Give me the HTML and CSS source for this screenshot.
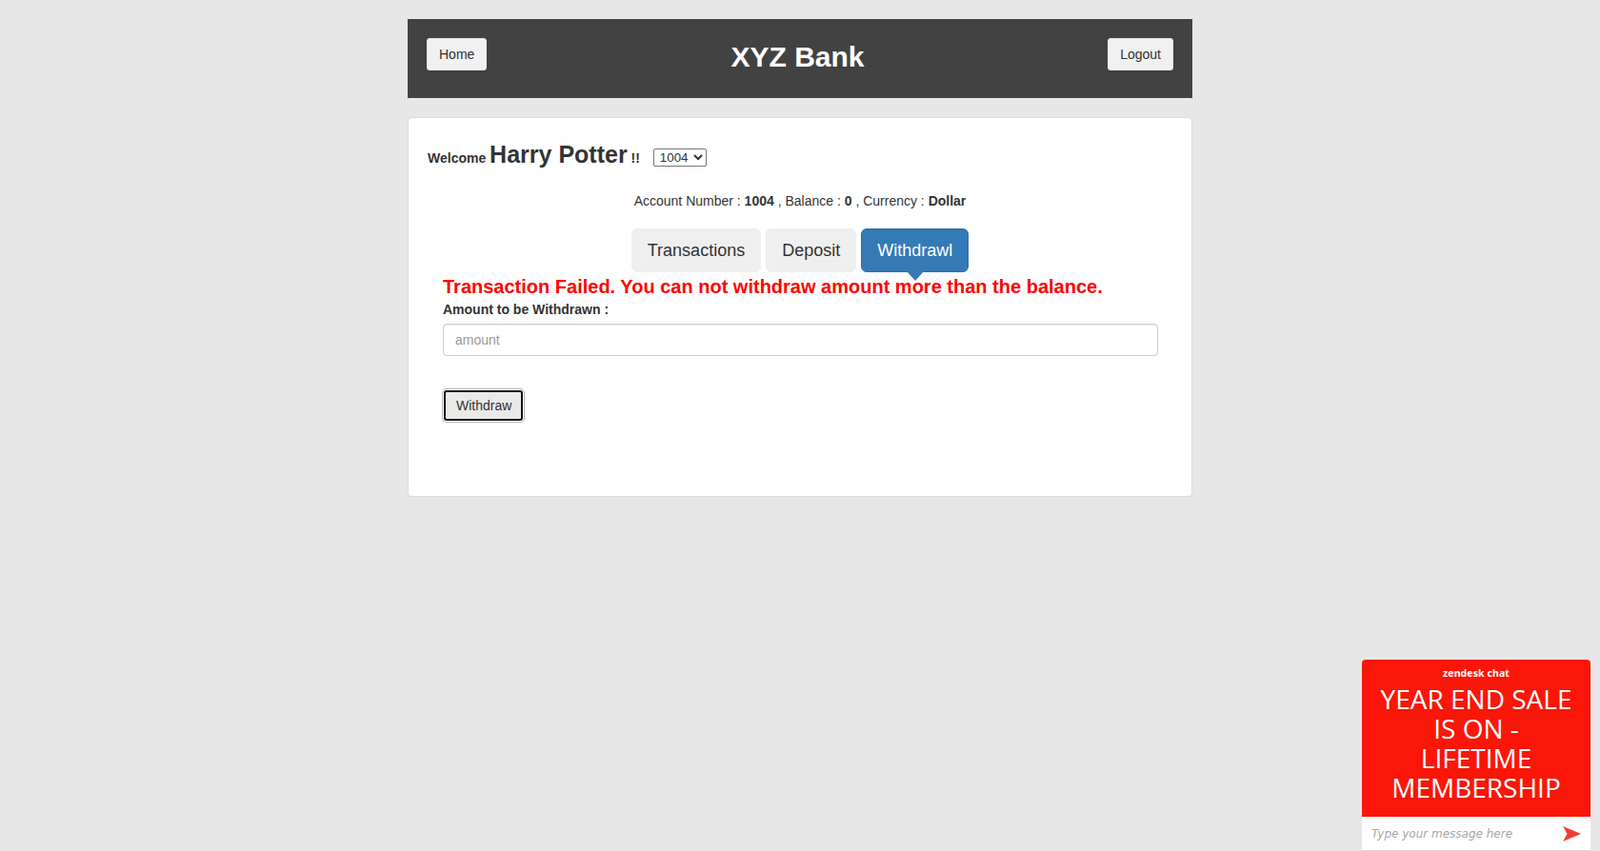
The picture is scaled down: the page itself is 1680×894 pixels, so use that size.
FILE: index.html
```html
<!DOCTYPE html>
<html lang="en">
<head>
<meta charset="utf-8">
<title>XYZ Bank</title>
<link rel="stylesheet" href="styles.css">
</head>
<body>
<div class="page">
  <header class="hdr">
    <button class="hbtn home">Home</button>
    <strong class="title">XYZ Bank</strong>
    <button class="hbtn logout">Logout</button>
  </header>
  <section class="card">
    <div class="welcome">
      <strong>Welcome <span class="big">Harry Potter</span> !!</strong>
      <select class="acctsel">
        <option>1004</option>
        <option>1005</option>
        <option>1006</option>
      </select>
    </div>
    <div class="acct">Account Number : <strong>1004</strong> , Balance : <strong>0</strong> , Currency : <strong>Dollar</strong></div>
    <div class="tabs">
      <button class="tab">Transactions</button>
      <button class="tab">Deposit</button>
      <button class="tab active">Withdrawl</button>
    </div>
    <form class="form">
      <span class="error">Transaction Failed. You can not withdraw amount more than the balance.</span>
      <label class="lbl">Amount to be Withdrawn :</label>
      <input class="amount" type="number" placeholder="amount">
      <div class="actions">
        <button type="button" class="submit">Withdraw</button>
      </div>
    </form>
  </section>
</div>

<aside class="chat">
  <div class="chat-top">
    <div class="brand">zendesk chat</div>
    <div class="promo">YEAR END SALE<br>IS ON -<br>LIFETIME<br>MEMBERSHIP</div>
  </div>
  <div class="chat-input">
    <span class="ph">Type your message here</span>
    <svg class="send" width="19" height="16" viewBox="0 0 19 16"><path d="M0 0 L19 8 L0 16 L4.5 8 Z" fill="#f53b35"/></svg>
  </div>
</aside>
</body>
</html>
```
FILE: styles.css
```css
* { box-sizing: border-box; }
html, body { margin: 0; padding: 0; }
body {
  background: #e7e7e7;
  font-family: "Liberation Sans", Arial, sans-serif;
  font-size: 14px;
  line-height: 20px;
  color: #333;
}
.page {
  width: 824px;
  margin: 0 auto;
  padding-top: 20px;
}
.hdr {
  background: #424242;
  height: 83px;
  padding: 20px 20px 0;
  display: grid;
  grid-template-columns: 1fr auto 1fr;
  align-items: start;
}
.hbtn {
  font-family: inherit;
  font-size: 14px;
  line-height: 20px;
  color: #333;
  background: #f1f1f1;
  border: 1px solid #e6e6e6;
  border-radius: 3px;
  padding: 6px 12px;
  height: 34px;
}
.home { justify-self: start; }
.logout { justify-self: end; }
.title {
  color: #fff;
  font-size: 30px;
  line-height: 40px;
  font-weight: bold;
  margin-left: -5px;
}
.card {
  margin-top: 20px;
  background: #fff;
  border: 1px solid #dcdcdc;
  border-radius: 4px;
  height: 399px;
  padding: 20px;
}
.welcome {
  display: flex;
  align-items: baseline;
  line-height: 36px;
  height: 36px;
}
.welcome strong { font-weight: bold; }
.big { font-size: 25px; }
.acctsel {
  margin-left: 14px;
  font-family: "Liberation Sans", Arial, sans-serif;
  font-size: 13.33px;
  height: 19px;
  width: 56px;
  padding: 0 0 0 2px;
  border: 1px solid #767676;
  border-radius: 2px;
  background: #fff;
  color: #333;
  align-self: center;
  margin-top: 6px;
}
.acct {
  margin-top: 21px;
  text-align: center;
}
.tabs {
  margin-top: 19px;
  display: flex;
  justify-content: center;
  gap: 5px;
}
.tab {
  font-family: inherit;
  font-size: 18px;
  line-height: 24px;
  padding: 10px 16px;
  height: 46px;
  border: 1px solid #efefef;
  border-radius: 6px;
  background: #efefef;
  color: #333;
  position: relative;
}
.tab.active {
  background: #337ab7;
  border-color: #2e6da4;
  color: #fff;
  z-index: 1;
}
.tab.active::after {
  content: "";
  position: absolute;
  left: 50%;
  top: 100%;
  margin-left: -9px;
  border-left: 9px solid transparent;
  border-right: 9px solid transparent;
  border-top: 10px solid #337ab7;
}
.form {
  margin: 4px 15px 0 16px;
  display: flex;
  flex-direction: column;
  align-items: flex-start;
}
.error {
  color: #ff0000;
  font-weight: bold;
  font-size: 20px;
  line-height: 22px;
}
.lbl {
  margin-top: 3px;
  font-weight: bold;
  line-height: 20px;
  margin-bottom: 5px;
}
.amount {
  width: 100%;
  height: 34px;
  padding: 6px 12px;
  font-family: inherit;
  font-size: 14px;
  color: #555;
  border: 1px solid #ccc;
  border-radius: 4px;
  box-shadow: inset 0 1px 1px rgba(0,0,0,.075);
  background: #fff;
}
.amount::placeholder { color: #999; }
.actions { margin-top: 36px; padding-left: 1px; }
.submit {
  font-family: inherit;
  font-size: 14px;
  line-height: 20px;
  color: #333;
  background: #e9e9e9;
  border: 2px solid #101010;
  border-radius: 3px;
  padding: 4px 10px 4px 11px;
  box-shadow: 0 0 0 1px #fff, 0 0 0 2px #b5b5b5;
}

.chat {
  position: fixed;
  right: 10px;
  bottom: 0;
  width: 240px;
  height: 201px;
  display: flex;
  flex-direction: column;
}
.chat-top {
  background: #fa1609;
  border-radius: 4px 4px 0 0;
  height: 165px;
  padding-top: 7px;
  text-align: center;
  color: #fff;
}
.brand {
  font-family: "Noto Sans", sans-serif;
  font-weight: bold;
  font-size: 10.5px;
  line-height: 15px;
  letter-spacing: 0.1px;
}
.promo {
  font-family: "Open Sans", "Noto Sans", sans-serif;
  font-size: 28px;
  line-height: 31px;
  margin-top: 4px;
}
.chat-input {
  flex: 1;
  background: #fff;
  border-bottom: 1px solid #d8d8d8;
  display: flex;
  align-items: center;
  justify-content: space-between;
  padding: 0 10px 0 10px;
}
.ph {
  font-family: "DejaVu Sans", sans-serif;
  font-style: italic;
  font-size: 12px;
  color: #a6a6a6;
}
.send { margin-top: 1px; }
```
